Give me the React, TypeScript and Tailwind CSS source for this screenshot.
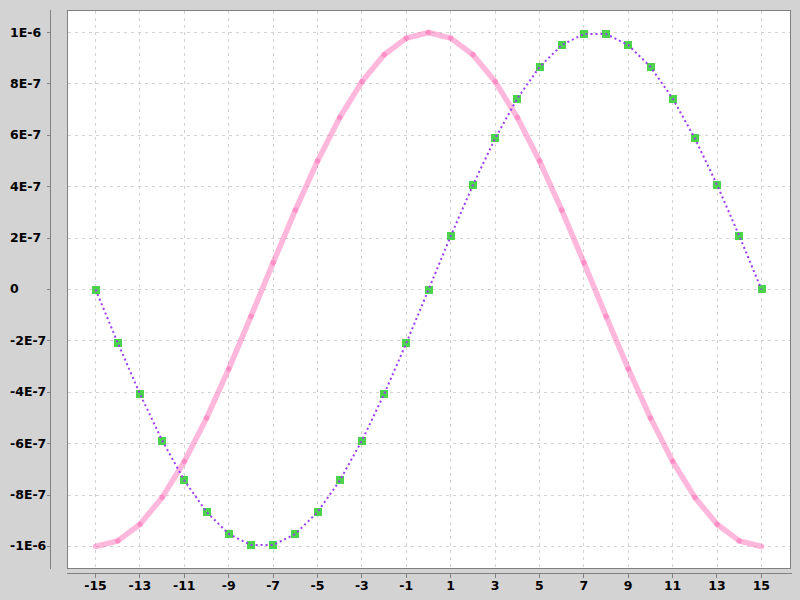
import React from "react";

const X = (x: number) => 95.6 + (x + 15) * 22.197 - 68;
const Y = (v: number) => 289.5 - v * 257 - 11;

const yLabels = ["1E-6", "8E-7", "6E-7", "4E-7", "2E-7", "0", "-2E-7", "-4E-7", "-6E-7", "-8E-7", "-1E-6"];
const xLabels = ["-15", "-13", "-11", "-9", "-7", "-5", "-3", "-1", "1", "3", "5", "7", "9", "11", "13", "15"];

const idx = Array.from({ length: 31 }, (_, i) => i - 15);
const pink = idx.map((i) => ({ x: X(i), y: Y(Math.cos((Math.PI * i) / 15)) }));
const purple = idx.map((i) => ({ x: X(i), y: Y(Math.sin((Math.PI * i) / 15)) }));

function Plot() {
  const vGrid = xLabels.map((l) => Math.floor(X(parseInt(l, 10)) + 68) - 68 + 0.5);
  const hGrid = Array.from({ length: 11 }, (_, k) => Math.round(289 - (5 - k) * 51.4) - 11 + 0.5);
  return (
    <svg width="722" height="557" viewBox="0 0 722 557" className="block">
      {vGrid.map((gx, i) => (
        <line key={"v" + i} x1={gx} y1={0} x2={gx} y2={557} stroke="#d2d2d2" strokeWidth={1} strokeDasharray="3 4" />
      ))}
      {hGrid.map((gy, i) => (
        <line key={"h" + i} x1={0} y1={gy} x2={722} y2={gy} stroke="#d2d2d2" strokeWidth={1} strokeDasharray="3 4" />
      ))}
      {pink.slice(1).map((p, i) => (
        <line
          key={"p" + i}
          x1={pink[i].x}
          y1={pink[i].y}
          x2={p.x}
          y2={p.y}
          stroke="#ff69b4"
          strokeOpacity={0.48}
          strokeWidth={5.5}
          strokeLinecap="round"
        />
      ))}
      {purple.map((p, i) => (
        <rect
          key={"m" + i}
          x={Math.round(p.x) - 4}
          y={Math.round(p.y) - 4}
          width={8}
          height={8}
          fill="#4bd44b"
        />
      ))}
      <polyline
        points={purple.map((p) => `${p.x},${p.y}`).join(" ")}
        fill="none"
        stroke="#9b3cf8"
        strokeWidth={2}
        strokeDasharray="2 3"
      />
    </svg>
  );
}

export default function App() {
  return (
    <div
      className="w-[800px] h-[600px] bg-[#d3d3d3] flex flex-col text-black overflow-hidden"
      style={{ fontFamily: '"DejaVu Sans", sans-serif' }}
    >
      <div className="flex pt-[10px]">
        <div className="w-[51px] h-[559px] border-r border-[#808080] flex flex-col">
          <div className="mt-[22px] h-[515px] flex flex-col justify-between">
            {yLabels.map((l) => (
              <div key={l} className="h-px flex items-center justify-between">
                <span className="pl-[10px] text-[12.5px] leading-[14px] font-bold whitespace-nowrap">{l}</span>
                <div className="w-[3px] h-px bg-[#808080]" />
              </div>
            ))}
          </div>
        </div>
        <div className="ml-[16px] w-[724px] h-[559px] bg-white border border-[#808080]">
          <Plot />
        </div>
      </div>
      <div className="ml-[67px] w-[725px] mt-[4px] border-t border-[#808080]">
        <div className="ml-[28px] w-[667px] flex justify-between">
          {xLabels.map((l) => (
            <div key={l} className="w-px flex flex-col items-center">
              <div className="w-px h-[4px] bg-[#808080]" />
              <span className="mt-[1px] text-[12.5px] leading-[14px] font-bold whitespace-nowrap">{l}</span>
            </div>
          ))}
        </div>
      </div>
    </div>
  );
}
